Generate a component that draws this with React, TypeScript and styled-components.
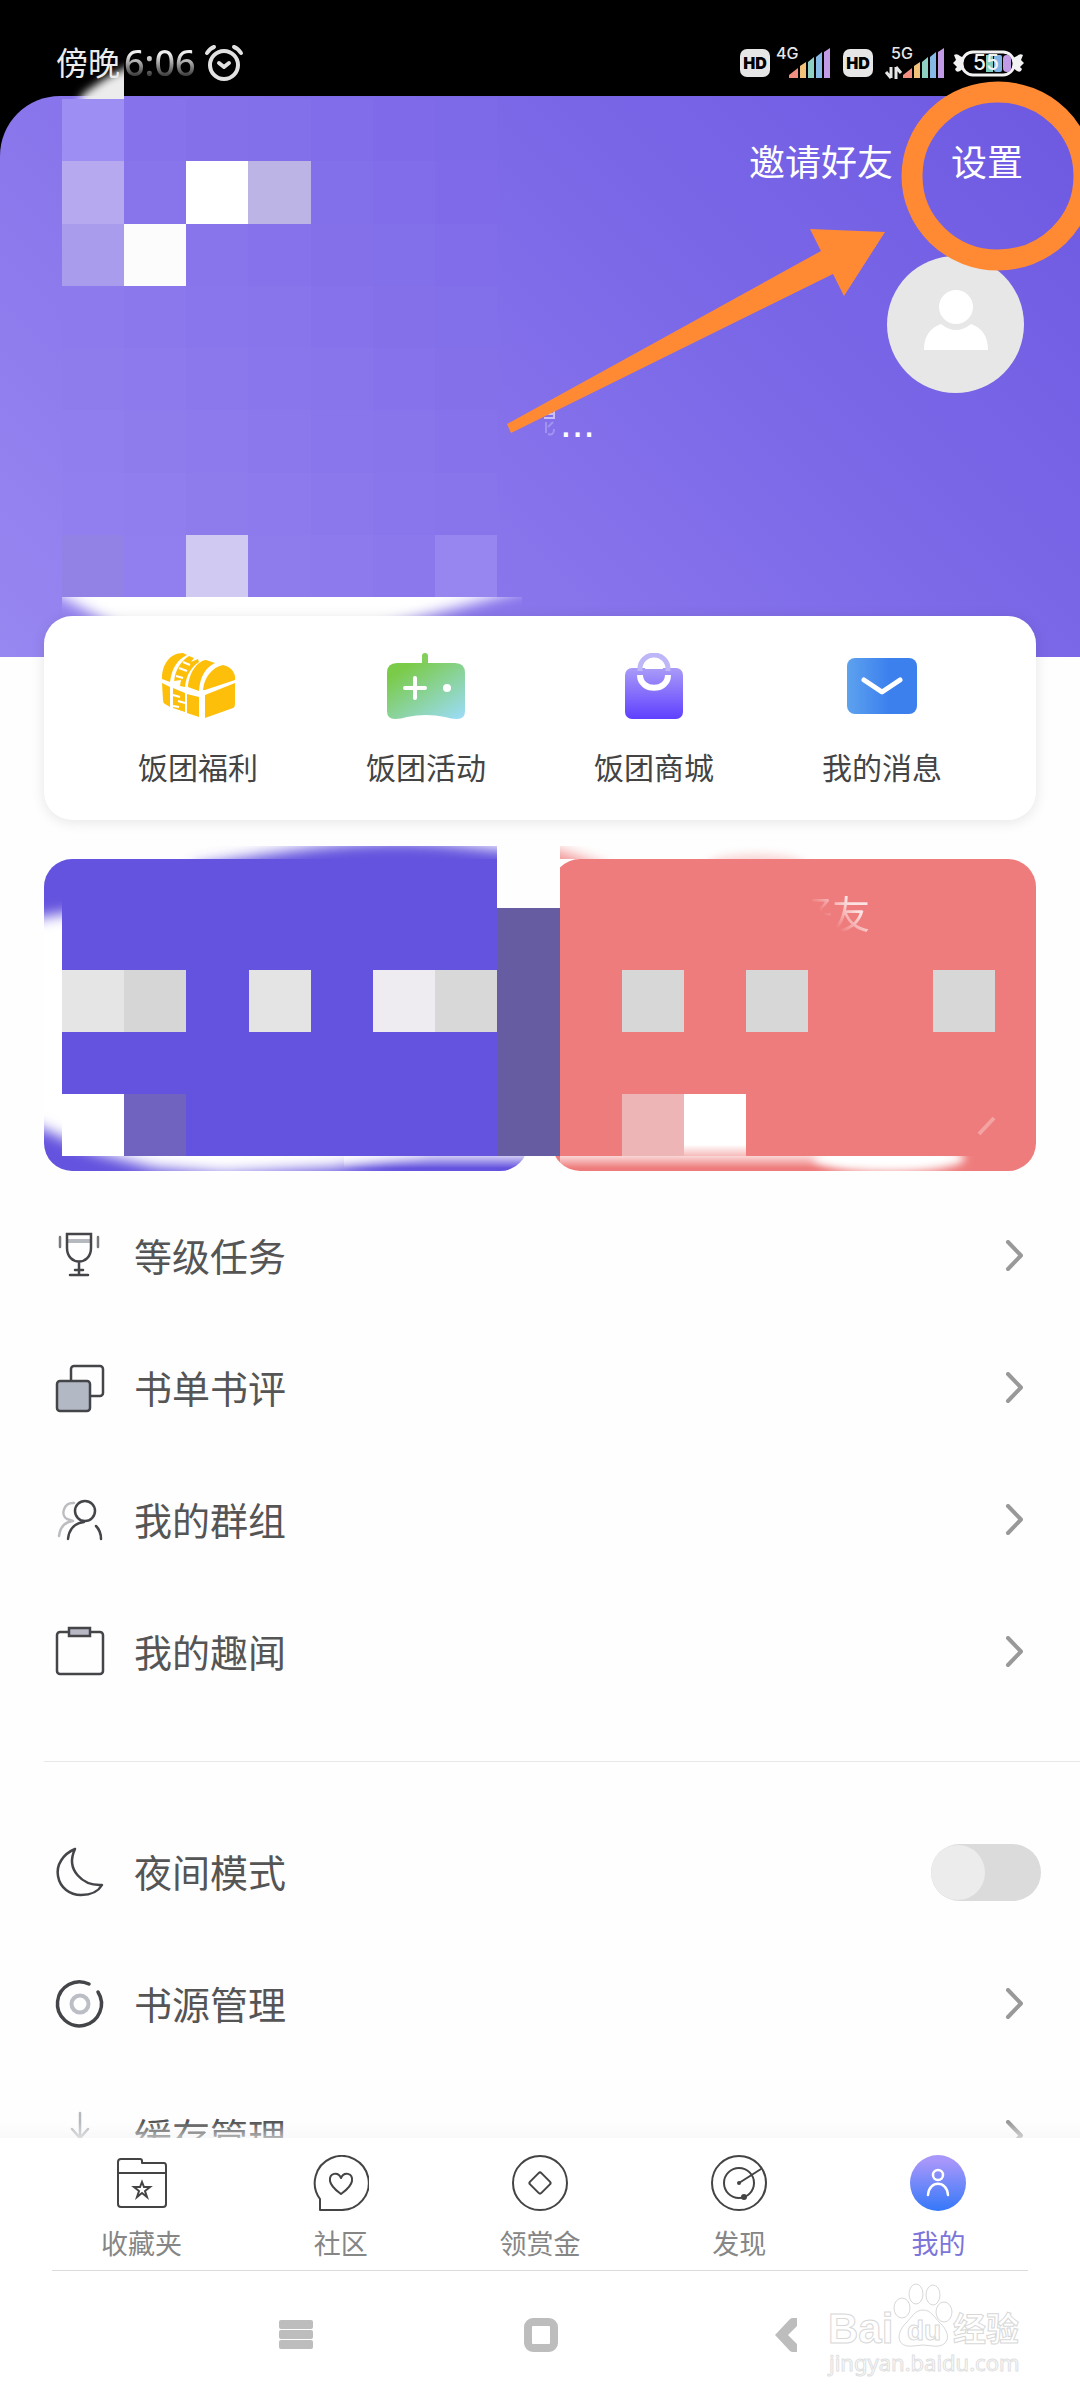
import React, { useState } from 'react';
import styled, { createGlobalStyle } from 'styled-components';

const GlobalStyle = createGlobalStyle`
  *, *::before, *::after { box-sizing: border-box; }
  body {
    margin: 0;
    background: #fff;
    font-family: "Noto Sans", "Noto Sans CJK SC", sans-serif;
    color: #555;
  }
  ul { list-style: none; margin: 0; padding: 0; }
  a { color: inherit; text-decoration: none; }
  button { border: 0; padding: 0; background: none; font: inherit; color: inherit; }
  svg { display: block; flex: none; }
`;

const Screen = styled.div`
  position: relative;
  display: flex;
  flex-direction: column;
  height: 100vh;
  overflow: hidden;
  background: #fefefe;
`;

/* ---------- status bar ---------- */

const StatusBar = styled.header`
  display: flex;
  align-items: center;
  justify-content: space-between;
  flex: none;
  height: 96px;
  padding: 30px 56px 0;
  background: #000;
`;

const StatusGroup = styled.div`
  display: flex;
  align-items: center;
  gap: 6px;
`;

const Clock = styled.div`
  position: relative;
  z-index: 4;
  display: flex;
  align-items: center;
  font-size: 32px;
  line-height: 36px;
  color: #ececec;
`;

const ClockDigits = styled.span`
  margin: 0 8px 0 4px;
  background: linear-gradient(#eee 25%, #444 82%);
  background-clip: text;
  color: transparent;
  font-size: 36px;
  font-weight: 500;
`;

const HdBadge = styled.span`
  width: 30px;
  height: 28px;
  border-radius: 7px;
  background: #e6e6e6;
  color: #000;
  font: 900 16px/28px "Inter", sans-serif;
  text-align: center;
`;

/* ---------- purple header ---------- */

const Scroller = styled.main`
  flex: 1;
  min-height: 0;
  overflow: hidden;
`;

const HeroBack = styled.div`
  background: #000;
`;

const Hero = styled.section`
  padding: 0 56px 220px;
  border-radius: 60px 60px 0 0;
  background: linear-gradient(225deg, #6c59e1, #7c69e8 38%, #8874eb 62%, #9787f1);
`;

const HeroLinks = styled.nav`
  display: flex;
  align-items: center;
  justify-content: flex-end;
  gap: 58px;
  height: 134px;
  padding-right: 1px;
  font-size: 36px;
  line-height: 48px;
  color: #fff;
`;

const Avatar = styled.button`
  display: flex;
  align-items: center;
  justify-content: center;
  width: 137px;
  height: 137px;
  margin: 26px 0 0 auto;
  padding-bottom: 10px;
  border-radius: 50%;
  background: #e7e7e7;
`;

const Intro = styled.p`
  display: flex;
  align-items: center;
  gap: 4px;
  height: 44px;
  margin: 0;
  padding: 16px 0 0 484px;
  color: #fff;
  font: 42px/40px "Liberation Sans", sans-serif;
`;

/* ---------- pixelated privacy blocks ---------- */

const Mosaic = styled.div<{ $cols: number; $rows: number }>`
  position: absolute;
  display: grid;
  grid-template-columns: repeat(${p => p.$cols}, 1fr);
  grid-template-rows: repeat(${p => p.$rows}, 1fr);
  pointer-events: none;
`;

const HeroMosaic = styled(Mosaic)`
  top: 99px;
  left: 62px;
  width: 435px;
  height: 498px;
`;

const BannerMosaic = styled(Mosaic)`
  top: -13px;
  left: 18px;
  right: 41px;
  height: 310px;
`;

const Cell = styled.span<{ $c: number; $r: number; $w?: number; $h?: number; $color: string }>`
  grid-area: ${p => `${p.$r} / ${p.$c} / span ${p.$h ?? 1} / span ${p.$w ?? 1}`};
  background: ${p => p.$color};
`;

const Overlay = styled.svg`
  position: absolute;
  pointer-events: none;
`;
const ClockSmear = styled(Overlay)`top: 60px; left: 62px;`;
const HeroSmear = styled(Overlay)`top: 597px; left: 62px;`;
const BannerSmear = styled(Overlay)`top: -13px; left: 0;`;
const Annotation = styled(Overlay)`top: 0; right: 0; z-index: 5;`;

/* ---------- shortcut card ---------- */

const Card = styled.nav`
  position: relative;
  display: grid;
  grid-template-columns: repeat(4, 1fr);
  margin: -41px 44px 0;
  padding: 36px 40px 32px;
  border-radius: 28px;
  background: #fff;
  box-shadow: 0 2px 14px rgba(0, 0, 0, 0.1);
`;

const Shortcut = styled.a`
  display: flex;
  flex-direction: column;
  align-items: center;
  gap: 28px;
  font-size: 30px;
  line-height: 40px;
  color: #444;
`;

const ShortcutIcon = styled.span`
  display: flex;
  align-items: center;
  height: 68px;
`;

/* ---------- banners ---------- */

const Banners = styled.section`
  position: relative;
  display: grid;
  grid-template-columns: 1fr 1fr;
  gap: 24px;
  margin: 39px 44px 19px;
`;

const Banner = styled.a<{ $color: string }>`
  height: 312px;
  padding: 30px 0 0 76px;
  border-radius: 28px;
  background: ${p => p.$color};
  font-size: 38px;
  line-height: 48px;
  text-align: center;
`;

const BannerText = styled.span`
  position: relative;
  z-index: 2;
  background: linear-gradient(45deg, transparent 42%, #fbe3e3 72%);
  background-clip: text;
  color: transparent;
`;

/* ---------- menu list ---------- */

const Row = styled.li<{ $end?: number }>`
  display: flex;
  height: 132px;
  padding: 0 ${p => p.$end ?? 57}px 0 56px;
`;

const rowInner = `
  display: flex;
  align-items: center;
  flex: 1;
  gap: 30px;
  font-size: 38px;
  line-height: 52px;
`;
const RowLink = styled.a`${rowInner}`;
const RowLabel = styled.label`${rowInner}`;
const RowText = styled.span`flex: 1;`;

const Divider = styled.hr`
  height: 1px;
  margin: 43px 0 44px 44px;
  border: 0;
  background: #e8e8e8;
`;

const Toggle = styled.input`
  appearance: none;
  width: 110px;
  height: 57px;
  margin: 0;
  border-radius: 29px;
  background: #dbdbdb;
  &::before {
    content: "";
    display: block;
    width: 54px;
    height: 55px;
    margin-top: 1px;
    border-radius: 50%;
    background: #ececec;
  }
  &:checked { background: #7d75d9; }
  &:checked::before { margin-left: 56px; }
`;

/* ---------- bottom bars ---------- */

const TabBar = styled.nav`
  position: relative;
  flex: none;
  display: grid;
  grid-template-columns: repeat(5, 1fr);
  padding: 17px 42px 10px;
  background: #fff;
  &::before {
    content: "";
    position: absolute;
    left: 0;
    right: 0;
    top: -16px;
    height: 16px;
    background: linear-gradient(rgba(247, 247, 247, 0), rgba(245, 245, 245, 0.6));
  }
`;

const Tab = styled.a<{ $active?: boolean }>`
  display: flex;
  flex-direction: column;
  align-items: center;
  gap: 17px;
  font-size: 27px;
  line-height: 32px;
  color: ${p => (p.$active ? '#7d75d9' : '#868686')};
`;

const SystemNav = styled.footer`
  position: relative;
  flex: none;
  display: flex;
  justify-content: center;
  height: 130px;
  padding-left: 2px;
  background: #fff;
  &::before {
    content: "";
    position: absolute;
    top: 0;
    left: 52px;
    right: 52px;
    height: 1px;
    background: #dcdcdc;
  }
`;

const SystemButton = styled.button`
  display: flex;
  align-items: center;
  justify-content: center;
  width: 245px;
`;

const Watermark = styled.svg`
  position: absolute;
  right: 50px;
  bottom: 20px;
  pointer-events: none;
`;

/* ---------- icons ---------- */

const DARK = '#444549';

const Signal = ({ x }: { x: number }) => (
  <g transform={`translate(${x} 0)`}>
    <path d="M0 33V30L9 23V33Z" fill="#f08e80" />
    <path d="M11 33V21L17 17V33Z" fill="#f3c27a" />
    <path d="M19 33V17L25 12V33Z" fill="#8fd0c4" />
    <path d="M27 33V12L33 7V33Z" fill="#86b9e6" />
    <path d="M35 33V7L41 3V33Z" fill="#c29be6" />
  </g>
);

const AlarmIcon = () => (
  <svg width="40" height="38" viewBox="0 0 40 38" fill="none" stroke="#e2e2e2" strokeLinecap="round" strokeLinejoin="round">
    <circle cx="20" cy="21" r="14" strokeWidth="4" />
    <path d="M15 19L20 23L25 19" strokeWidth="4" />
    <path d="M3 9C5 6 7 4 10 3M37 9C35 6 33 4 30 3" strokeWidth="4" />
  </svg>
);

const BatteryIcon = () => (
  <svg width="71" height="28" viewBox="0 0 71 28">
    <path d="M1 6Q4 4 7 7L11 9V19L7 22Q3 24 2 20L4 18L0 14L3 11Z M70 6Q67 4 64 7L60 9V19L64 22Q68 24 69 20L67 18L71 14L68 11Z" fill="#f2f2f2" />
    <rect x="9" y="3" width="52" height="23" rx="11" fill="#000" stroke="#f2f2f2" strokeWidth="3" />
    <rect x="33" y="6" width="7" height="17" fill="#7fcdbd" />
    <rect x="41" y="6" width="8" height="17" rx="2" fill="#7fb4e4" />
    <rect x="50" y="6" width="8" height="17" rx="4" fill="#c29be6" />
    <text x="20" y="21" fill="#f2f2f2" fontSize="21" fontFamily="Inter, sans-serif" fontWeight="500">55</text>
  </svg>
);

const ChestIcon = () => (
  <svg width="75" height="66" viewBox="0 0 75 66" fill="#fdbf0a">
    <path d="M1 26C1 11 9 0 22 0L26 2C16 7 11 15 9 29Z" />
    <path d="M13 29C14 17 20 8 28 3L33 5L30 9L37 6L38 9C30 14 25 23 24 34L19 33L20 27L13 28Z" />
    <path d="M18 15L26 18M15 23L22 25M22 9L29 12" stroke="#fff" strokeWidth="2" />
    <path d="M27 34C28 20 36 8 45 7L54 10C44 15 39 24 38 38Z" />
    <path d="M42 37C43 25 51 14 62 12C71 14 75 21 74 27L44 37Z" />
    <path d="M1 30L9 34V54L4 51Q2 50 2 47Z" />
    <path d="M12 35L24 40V59L12 55Z" />
    <path d="M12 42L19 44M17 48L24 50M12 53L18 54" stroke="#fff" strokeWidth="2" />
    <path d="M26 41L38 44V64L26 60Z" />
    <path d="M44 42L74 30V51Q74 54 72 55L44 65Z" />
  </svg>
);

const GameIcon = () => (
  <svg width="78" height="66" viewBox="0 0 78 66">
    <defs>
      <linearGradient id="game" x1="0.1" y1="0" x2="1" y2="1">
        <stop offset="0.1" stopColor="#7acb48" />
        <stop offset="1" stopColor="#9cdcfb" />
      </linearGradient>
    </defs>
    <rect x="35" y="0" width="6" height="14" rx="3" fill="#82cf5c" />
    <path d="M10 10H68Q78 10 78 20V58Q78 66 70 66Q64 66 58 64Q39 60 20 64Q14 66 8 66Q0 66 0 58V20Q0 10 10 10Z" fill="url(#game)" />
    <path d="M18 35H38M28 25V45" stroke="#fff" strokeWidth="4" strokeLinecap="round" />
    <circle cx="60" cy="35" r="4" fill="#fff" />
  </svg>
);

const BagIcon = () => (
  <svg width="60" height="66" viewBox="0 0 60 66" fill="none">
    <defs>
      <linearGradient id="bag" x1="0" y1="0" x2="0" y2="1">
        <stop offset="0" stopColor="#a99bf8" />
        <stop offset="1" stopColor="#5f40ff" />
      </linearGradient>
    </defs>
    <rect x="1" y="15" width="58" height="51" rx="7" fill="url(#bag)" />
    <path d="M16 18V16A14 14 0 0 1 44 16V18" stroke="#bdb6f7" strokeWidth="5" />
    <path d="M21 16A9 10 0 0 1 39 16Z" fill="#fff" />
    <path d="M16 22C16 39 44 39 44 22" stroke="#fff" strokeWidth="6" />
  </svg>
);

const MailIcon = () => (
  <svg width="70" height="56" viewBox="0 0 70 56">
    <defs>
      <linearGradient id="mail">
        <stop offset="0" stopColor="#5da2ee" />
        <stop offset="0.6" stopColor="#3c80ee" />
      </linearGradient>
    </defs>
    <rect width="70" height="56" rx="8" fill="url(#mail)" />
    <path d="M17 22L35 34L53 22" fill="none" stroke="#fff" strokeWidth="5" strokeLinecap="round" strokeLinejoin="round" />
  </svg>
);

const RowIcon = ({ children }: { children: React.ReactNode }) => (
  <svg width="48" height="48" viewBox="0 0 48 48" fill="none" stroke={DARK} strokeWidth="2.5" strokeLinecap="round" strokeLinejoin="round" overflow="visible">
    {children}
  </svg>
);

const icons = {
  trophy: (
    <RowIcon>
      <path d="M12 9H35" stroke="#b5b8bd" strokeWidth="4" strokeLinecap="butt" />
      <path d="M11 2H35V16C35 34 11 34 11 16ZM23 30V43M19 38H27M14 43H32" strokeLinejoin="miter" />
      <path d="M4 5V15M42 5V15" stroke="#77787c" />
    </RowIcon>
  ),
  books: (
    <RowIcon>
      <rect x="15" y="2" width="32" height="30" rx="3" />
      <rect x="1" y="17" width="33" height="30" rx="3" fill="#b2b9c5" />
    </RowIcon>
  ),
  group: (
    <RowIcon>
      <path d="M18 7C8 6 4 19 11 23L17 25C8 26 4 32 3 40" stroke="#bbbdc0" />
      <circle cx="29" cy="15" r="10" />
      <path d="M12 43C13 33 19 27 28 26M40 30C44 34 45 38 45 43" />
    </RowIcon>
  ),
  board: (
    <RowIcon>
      <rect x="1" y="4" width="46" height="42" rx="3" />
      <path d="M13 0H34V8H13Z" fill="#b7b8c4" strokeLinejoin="miter" />
    </RowIcon>
  ),
  moon: (
    <RowIcon>
      <path d="M19 1C7 6 0 17 2 28C4 40 14 47 25 47C34 47 42 44 46 37C27 38 9 22 19 1Z" />
    </RowIcon>
  ),
  disc: (
    <RowIcon>
      <path d="M33 4A22 22 0 1 0 42 12" strokeWidth="3.5" />
      <circle cx="24" cy="24" r="8.5" stroke="#bcbec6" strokeWidth="4" />
    </RowIcon>
  ),
  download: (
    <RowIcon>
      <path d="M24 1V26M16 17L24 26L32 17" stroke="#b5b8bd" />
      <path d="M2 30V46H46V30" />
    </RowIcon>
  ),
};

const Chevron = () => (
  <svg width="18" height="32" viewBox="0 0 18 32" fill="none" stroke="#999" strokeWidth="4" strokeLinecap="round" strokeLinejoin="round">
    <path d="M3 2L16 15.5L3 29" />
  </svg>
);

const TabIcon = ({ children }: { children: React.ReactNode }) => (
  <svg width="56" height="56" viewBox="0 0 56 56" fill="none" stroke="#444" strokeWidth="2" strokeLinecap="round" strokeLinejoin="round">
    {children}
  </svg>
);

const tabs = [
  {
    name: '收藏夹',
    icon: (
      <TabIcon>
        <path d="M4 7Q4 4 7 4H26Q28 4 28 6V8H50Q52 8 52 11V49Q52 52 49 52H7Q4 52 4 49ZM4 18H52" />
        <path d="M28 27L30 32L36 32L31 36L33 42L28 38L23 42L25 36L20 32L26 32Z" strokeLinejoin="miter" />
      </TabIcon>
    ),
  },
  {
    name: '社区',
    icon: (
      <TabIcon>
        <path d="M7 55V44A27 27 0 1 1 28 55Z" />
        <path d="M28 23C25 16 16 18 17 26C18 32 24 36 28 39C32 36 38 32 39 26C40 18 31 16 28 23Z" />
      </TabIcon>
    ),
  },
  {
    name: '领赏金',
    icon: (
      <TabIcon>
        <circle cx="28" cy="28" r="27" />
        <rect x="20" y="20" width="16" height="16" rx="2" transform="rotate(45 28 28)" />
      </TabIcon>
    ),
  },
  {
    name: '发现',
    icon: (
      <TabIcon>
        <circle cx="28" cy="28" r="27" />
        <circle cx="28" cy="28" r="15" />
        <path d="M28 28L50 14" />
        <circle cx="28" cy="28" r="2" fill="#444" stroke="none" />
        <circle cx="33" cy="42" r="3" fill="#444" stroke="none" />
      </TabIcon>
    ),
  },
  {
    name: '我的',
    active: true,
    icon: (
      <svg width="56" height="56" viewBox="0 0 56 56" fill="none" stroke="#fff" strokeWidth="2.5" strokeLinecap="round">
        <defs>
          <linearGradient id="me" x1="0" y1="0" x2="0" y2="1">
            <stop offset="0.1" stopColor="#a897fa" />
            <stop offset="1" stopColor="#3478f9" />
          </linearGradient>
        </defs>
        <circle cx="28" cy="28" r="28" fill="url(#me)" stroke="none" />
        <circle cx="28" cy="20" r="5" />
        <path d="M18 40C19 25 37 25 38 40" />
      </svg>
    ),
  },
];

/* ---------- data ---------- */

const shortcuts = [
  { name: '饭团福利', icon: <ChestIcon /> },
  { name: '饭团活动', icon: <GameIcon /> },
  { name: '饭团商城', icon: <BagIcon /> },
  { name: '我的消息', icon: <MailIcon /> },
];

const mainRows = [
  { name: '等级任务', icon: icons.trophy },
  { name: '书单书评', icon: icons.books },
  { name: '我的群组', icon: icons.group },
  { name: '我的趣闻', icon: icons.board },
];

const toolRows = [
  { name: '书源管理', icon: icons.disc },
  { name: '缓存管理', icon: icons.download },
];

type Block = { c: number; r: number; w?: number; h?: number; color: string };

const heroMarks: Block[] = [
  { c: 1, r: 1, color: '#9d8ef3' },
  { c: 1, r: 2, color: '#b6a9f0' },
  { c: 3, r: 2, color: '#fff' },
  { c: 4, r: 2, color: '#bdb4e6' },
  { c: 1, r: 3, color: '#a99cec' },
  { c: 2, r: 3, color: '#fcfcfc' },
  { c: 1, r: 8, color: '#9282e5' },
  { c: 3, r: 8, color: '#d0c9f2' },
  { c: 7, r: 8, color: '#9886f0' },
];

const stops: [number, number[]][] = [
  [0.38, [124, 105, 232]],
  [0.62, [136, 116, 235]],
  [1, [151, 135, 241]],
];

// Every block takes the header gradient's colour at its own centre.
function heroShade(col: number, row: number) {
  const t = (1080 - (31 + 62 * col) + (62 * row - 28)) / 1641;
  const i = t < stops[1][0] ? 0 : 1;
  const [t0, a] = stops[i];
  const [t1, b] = stops[i + 1];
  const k = (t - t0) / (t1 - t0);
  return `rgb(${a.map((v, n) => Math.round(v + (b[n] - v) * k)).join(',')})`;
}

const heroBlocks: Block[] = [];
for (let r = 1; r <= 8; r++) {
  for (let c = 1; c <= 7; c++) {
    heroBlocks.push(heroMarks.find(m => m.c === c && m.r === r) ?? { c, r, color: heroShade(c, r) });
  }
}

const PURPLE = '#6453de';
const CORAL = '#ef7c7c';

const bannerBlocks: Block[] = [
  { c: 1, r: 2, w: 7, h: 4, color: PURPLE },
  { c: 8, r: 1, color: '#fefefe' },
  { c: 8, r: 2, h: 4, color: '#655ca1' },
  { c: 1, r: 3, color: '#e5e5e5' },
  { c: 2, r: 3, color: '#d6d6d6' },
  { c: 4, r: 3, color: '#e4e4e4' },
  { c: 6, r: 3, color: '#eeebf1' },
  { c: 7, r: 3, color: '#d8d8d8' },
  { c: 1, r: 5, color: '#fff' },
  { c: 2, r: 5, color: '#7062bf' },
  { c: 10, r: 3, color: '#d7d7d7' },
  { c: 12, r: 3, color: '#d7d7d7' },
  { c: 15, r: 3, color: '#d7d7d7' },
  { c: 10, r: 5, color: '#eeb5b7' },
  { c: 11, r: 5, color: `linear-gradient(#fff 82%, #f6baba)` },
];

const Blocks = ({ items }: { items: Block[] }) => (
  <>
    {items.map(b => (
      <Cell key={`${b.c}-${b.r}`} $c={b.c} $r={b.r} $w={b.w} $h={b.h} $color={b.color} />
    ))}
  </>
);

export default function App() {
  const [night, setNight] = useState(false);
  return (
    <Screen>
      <GlobalStyle />

      <StatusBar>
        <Clock>
          <span>傍晚</span>
          <ClockDigits>6:06</ClockDigits>
          <AlarmIcon />
        </Clock>
        <StatusGroup>
          <HdBadge>HD</HdBadge>
          <svg width="61" height="44" viewBox="0 -4 61 44">
            <text x="0" y="14" fill="#e6e6e6" fontSize="16" fontFamily="Inter, sans-serif" fontWeight="500">4G</text>
            <Signal x={13} />
          </svg>
          <HdBadge>HD</HdBadge>
          <svg width="68" height="44" viewBox="0 -4 68 44">
            <text x="12" y="14" fill="#e6e6e6" fontSize="16" fontFamily="Inter, sans-serif" fontWeight="500">5G</text>
            <path d="M12 22V33M12 33L7 27M17 34V22M17 22L22 28" fill="none" stroke="#e6e6e6" strokeWidth="3" />
            <Signal x={24} />
          </svg>
          <BatteryIcon />
        </StatusGroup>
      </StatusBar>

      <Scroller>
        <HeroBack>
          <Hero>
            <HeroLinks>
              <a href="#invite">邀请好友</a>
              <a href="#settings">设置</a>
            </HeroLinks>
            <Avatar aria-label="头像">
              <svg width="64" height="60" viewBox="0 0 64 60" fill="#fff">
                <circle cx="32" cy="17" r="17" />
                <path d="M0 60C0 46 6 38 17 34Q32 46 47 34C58 38 64 46 64 60Z" />
              </svg>
            </Avatar>
            <Intro>
              <svg width="16" height="30" viewBox="0 0 16 30" fill="none" strokeWidth="2">
                <path d="M14 3V10H4M8 6H13" stroke="#c9c0f8" />
                <path d="M6 14V25M13 14L8 19M8 26Q14 28 14 21" stroke="#a094f0" />
              </svg>
              ...
            </Intro>
          </Hero>
        </HeroBack>

        <HeroMosaic $cols={7} $rows={8}>
          <Blocks items={heroBlocks} />
        </HeroMosaic>
        <ClockSmear width="62" height="39" viewBox="0 0 62 39">
          <defs>
            <filter id="soft" x="-30%" y="-50%" width="160%" height="200%"><feGaussianBlur stdDeviation="4" /></filter>
          </defs>
          <path d="M6 60L22 33L44 18L80 0V60Z" fill="#ececec" filter="url(#soft)" />
        </ClockSmear>
        <HeroSmear width="460" height="20" viewBox="0 0 460 20">
          <defs>
            <filter id="soft2" x="-20%" width="140%" y="-200%" height="500%"><feGaussianBlur stdDeviation="7" /></filter>
          </defs>
          <path d="M-40 -24H520L310 34H60Z" fill="#fff" filter="url(#soft2)" />
        </HeroSmear>

        <Card>
          {shortcuts.map(s => (
            <Shortcut key={s.name} href="#shortcut">
              <ShortcutIcon>{s.icon}</ShortcutIcon>
              {s.name}
            </Shortcut>
          ))}
        </Card>

        <Banners>
          <Banner href="#welfare" aria-label="福利" $color={PURPLE} />
          <Banner href="#invite" $color={CORAL}>
            <BannerText>好友</BannerText>
          </Banner>
          <BannerSmear width="992" height="328" viewBox="0 0 992 328">
            <defs>
              <filter id="blur" x="-20%" y="-20%" width="140%" height="140%"><feGaussianBlur stdDeviation="7" /></filter>
              <filter id="blurSmall" x="-20%" y="-60%" width="140%" height="220%"><feGaussianBlur stdDeviation="4" /></filter>
              <clipPath id="topLeft"><rect x="18" y="0" width="435" height="63" /></clipPath>
              <clipPath id="topRight"><rect x="516" y="0" width="400" height="13" /></clipPath>
              <linearGradient id="streak" x1="0" y1="0" x2="0" y2="1">
                <stop offset="0" stopColor="#fff" stopOpacity="0.7" />
                <stop offset="1" stopColor="#fff" stopOpacity="0" />
              </linearGradient>
            </defs>
            <path d="M-30 76L40 64V200L380 280V306L290 322L180 328L110 322L50 306L-30 270Z" fill="#fff" filter="url(#blur)" />
            <path d="M300 310H483V322H300Z" fill="url(#streak)" />
            <g clipPath="url(#topLeft)">
              <path d="M150 20C260 2 320 -8 400 -2L480 6V80H150Z" fill={PURPLE} filter="url(#blur)" />
              <path d="M18 40H453V80H18ZM40 13H453V63H40Z" fill={PURPLE} />
            </g>
            <g clipPath="url(#topRight)">
              <path d="M480 -8L560 20V40H480Z" fill={CORAL} filter="url(#blur)" opacity="0.8" />
              <ellipse cx="712" cy="20" rx="50" ry="12" fill={CORAL} filter="url(#blurSmall)" opacity="0.3" />
            </g>
            <path d="M516 310H810V322H516Z" fill="url(#streak)" />
            <ellipse cx="845" cy="312" rx="76" ry="14" fill="#fff" filter="url(#blurSmall)" />
            <rect x="750" y="270" width="201" height="40" fill={CORAL} />
            <path d="M935 288L950 272" stroke="#f4a3a3" strokeWidth="4" />
          </BannerSmear>
          <BannerMosaic $cols={15} $rows={5}>
            <Blocks items={bannerBlocks} />
          </BannerMosaic>
        </Banners>

        <ul>
          {mainRows.map(r => (
            <Row key={r.name}>
              <RowLink href="#row">
                {r.icon}
                <RowText>{r.name}</RowText>
                <Chevron />
              </RowLink>
            </Row>
          ))}
        </ul>
        <Divider />
        <ul>
          <Row $end={39}>
            <RowLabel htmlFor="night">
              {icons.moon}
              <RowText>夜间模式</RowText>
              <Toggle id="night" type="checkbox" checked={night} onChange={e => setNight(e.target.checked)} />
            </RowLabel>
          </Row>
          {toolRows.map(r => (
            <Row key={r.name}>
              <RowLink href="#row">
                {r.icon}
                <RowText>{r.name}</RowText>
                <Chevron />
              </RowLink>
            </Row>
          ))}
        </ul>
      </Scroller>

      <TabBar>
        {tabs.map(t => (
          <Tab key={t.name} href="#tab" $active={t.active}>
            {t.icon}
            {t.name}
          </Tab>
        ))}
      </TabBar>

      <SystemNav>
        <SystemButton aria-label="菜单">
          <svg width="34" height="30" viewBox="0 0 34 30" fill="#bdbdbd">
            <rect width="34" height="9" rx="2" />
            <rect y="10" width="34" height="9" rx="2" />
            <rect y="20" width="34" height="9" rx="2" />
          </svg>
        </SystemButton>
        <SystemButton aria-label="主页">
          <svg width="34" height="34" viewBox="0 0 34 34" fill="none">
            <rect x="4" y="4" width="26" height="26" rx="5" stroke="#bdbdbd" strokeWidth="8" />
          </svg>
        </SystemButton>
        <SystemButton aria-label="返回">
          <svg width="22" height="34" viewBox="0 0 22 34" fill="#bdbdbd">
            <path d="M0 17L15 1Q16 0 18 0H22V8L13 17L22 26V34H18Q16 34 15 33Z" />
          </svg>
        </SystemButton>
        <Watermark width="204" height="100" viewBox="-2 0 204 100" fill="#fff" stroke="#d8d8d8" strokeWidth="1">
          <ellipse cx="74" cy="28" rx="8" ry="10" />
          <ellipse cx="88" cy="14" rx="7" ry="10" />
          <ellipse cx="105" cy="15" rx="7" ry="10" />
          <ellipse cx="116" cy="32" rx="8" ry="10" />
          <path d="M95 30C103 30 106 37 112 43C125 55 120 68 105 66Q95 64 85 66C69 68 67 54 78 43C84 37 87 30 95 30Z" />
          <g fontWeight="700" fontFamily='"Liberation Sans", sans-serif'>
            <text x="0" y="63" fontSize="42">Bai</text>
            <text x="79" y="60" fontSize="28">du</text>
            <text x="125" y="61" fontSize="33" fontFamily='"Noto Sans CJK SC", sans-serif'>经验</text>
          </g>
          <text x="1" y="91" fontSize="22" fontFamily='"Noto Sans", sans-serif' stroke="#e0e0e0">jingyan.baidu.com</text>
        </Watermark>
      </SystemNav>

      <Annotation width="580" height="450" viewBox="0 0 580 450">
        <ellipse cx="498" cy="176" rx="86" ry="84" fill="none" stroke="#ff8a33" strokeWidth="21" />
        <path d="M7 424L321 251L310 229L385 232L344 296L333 274L11 433Z" fill="#ff8a33" />
      </Annotation>
    </Screen>
  );
}
